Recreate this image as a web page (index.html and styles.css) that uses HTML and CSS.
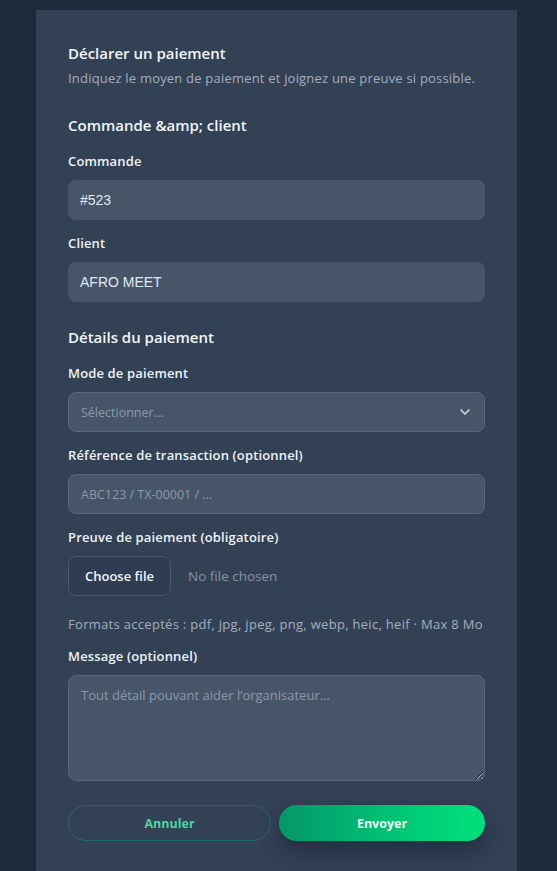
FILE: index.html
```html
<!DOCTYPE html>
<html lang="fr">
<head>
<meta charset="utf-8">
<title>Déclarer un paiement</title>
<link rel="stylesheet" href="styles.css">
</head>
<body>
<main class="card">
  <h1 class="title">Déclarer un paiement</h1>
  <p class="subtitle">Indiquez le moyen de paiement et joignez une preuve si possible.</p>

  <h2 class="section">Commande &amp;amp; client</h2>
  <div class="field">
    <label class="label">Commande</label>
    <div class="input readonly">#523</div>
  </div>
  <div class="field">
    <label class="label">Client</label>
    <div class="input readonly">AFRO MEET</div>
  </div>

  <h2 class="section second">Détails du paiement</h2>
  <div class="field">
    <label class="label">Mode de paiement</label>
    <div class="input select">
      <span class="placeholder">Sélectionner…</span>
      <svg class="chevron" width="12" height="8" viewBox="0 0 12 8"><path d="M2 2 6 6 10 2" fill="none" stroke="#cbd5e1" stroke-width="1.7" stroke-linecap="round" stroke-linejoin="round"/></svg>
    </div>
  </div>
  <div class="field">
    <label class="label">Référence de transaction (optionnel)</label>
    <div class="input bordered"><span class="placeholder">ABC123 / TX-00001 / …</span></div>
  </div>
  <div class="field">
    <label class="label">Preuve de paiement (obligatoire)</label>
    <div class="file">
      <button class="file-btn" type="button">Choose file</button>
      <span class="file-none">No file chosen</span>
    </div>
    <p class="hint">Formats acceptés : pdf, jpg, jpeg, png, webp, heic, heif · Max 8 Mo</p>
  </div>
  <div class="field">
    <label class="label">Message (optionnel)</label>
    <textarea class="textarea" placeholder="Tout détail pouvant aider l’organisateur…"></textarea>
  </div>

  <div class="actions">
    <button class="btn cancel" type="button">Annuler</button>
    <button class="btn send" type="button">Envoyer</button>
  </div>
</main>
</body>
</html>
```
FILE: styles.css
```css
* { box-sizing: border-box; }
html, body { margin: 0; height: 100%; }
body {
  background: #1e293b;
  font-family: "Open Sans", "Lato", sans-serif;
  padding: 10px 40px 0 36px;
  overflow: hidden;
}
.card {
  background: #334155;
  width: 481px;
  min-height: 900px;
  padding: 33px 32px 40px 32px;
  color: #e2e8f0;
}
.title {
  margin: 0;
  font-size: 15px;
  line-height: 20px;
  font-weight: 600;
  color: #f1f5f9;
}
.subtitle {
  margin: 6px 0 0;
  font-size: 13px;
  line-height: 18px;
  letter-spacing: 0.2px;
  color: #a3aec0;
}
.section {
  margin: 27px 0 0;
  font-size: 15px;
  line-height: 22px;
  font-weight: 600;
  color: #f1f5f9;
}
.section.second { margin-top: 24px; }
.section + .field { margin-top: 16px; }
.field { margin-top: 14px; }
.label {
  display: block;
  font-size: 13px;
  line-height: 18px;
  letter-spacing: 0.15px;
  font-weight: 600;
  color: #eef2f7;
  margin-bottom: 10px;
}
.input {
  height: 40px;
  border-radius: 8px;
  background: #475569;
  padding: 0 12px;
  display: flex;
  align-items: center;
  font-size: 14px;
  color: #e2e8f0;
}
.input.readonly { font-family: "Liberation Sans", Arial, sans-serif; }
.input.bordered, .input.select { border: 1px solid #56657a; }
.select { justify-content: space-between; padding-right: 13px; }
.placeholder { color: #8d99ab; font-size: 12.5px; }
.chevron { display: block; }
.file { display: flex; align-items: center; gap: 17px; }
.file-btn {
  height: 40px;
  width: 103px;
  border: 1px solid #4a586d;
  border-radius: 8px;
  background: #2f3c51;
  color: #f1f5f9;
  font: 600 13px "Open Sans", sans-serif;
}
.file-none { font-size: 13.5px; color: #8492a6; }
.hint {
  margin: 19px 0 0;
  font-size: 13px;
  line-height: 18px;
  letter-spacing: 0.3px;
  color: #a3aec0;
}
.textarea {
  display: block;
  width: 100%;
  height: 106px;
  border-radius: 8px;
  background: #475569;
  border: 1px solid #56657a;
  padding: 10px 12px;
  font: 13px "Open Sans", sans-serif;
  color: #e2e8f0;
  resize: vertical;
}
.textarea::placeholder { color: #8d99ab; }
.actions {
  margin-top: 24px;
  display: grid;
  grid-template-columns: 203px 1fr;
  gap: 8px;
}
.btn {
  height: 36px;
  border-radius: 999px;
  font: 700 12.5px "Open Sans", sans-serif;
}
.cancel {
  background: transparent;
  border: 1px solid #1f6b69;
  color: #4fd1a5;
}
.send {
  border: none;
  color: #f0fdf4;
  background: linear-gradient(90deg, #059669 0%, #00cf78 70%, #00e07a 100%);
  box-shadow: 0 10px 20px rgba(15, 23, 42, 0.45);
}
```
